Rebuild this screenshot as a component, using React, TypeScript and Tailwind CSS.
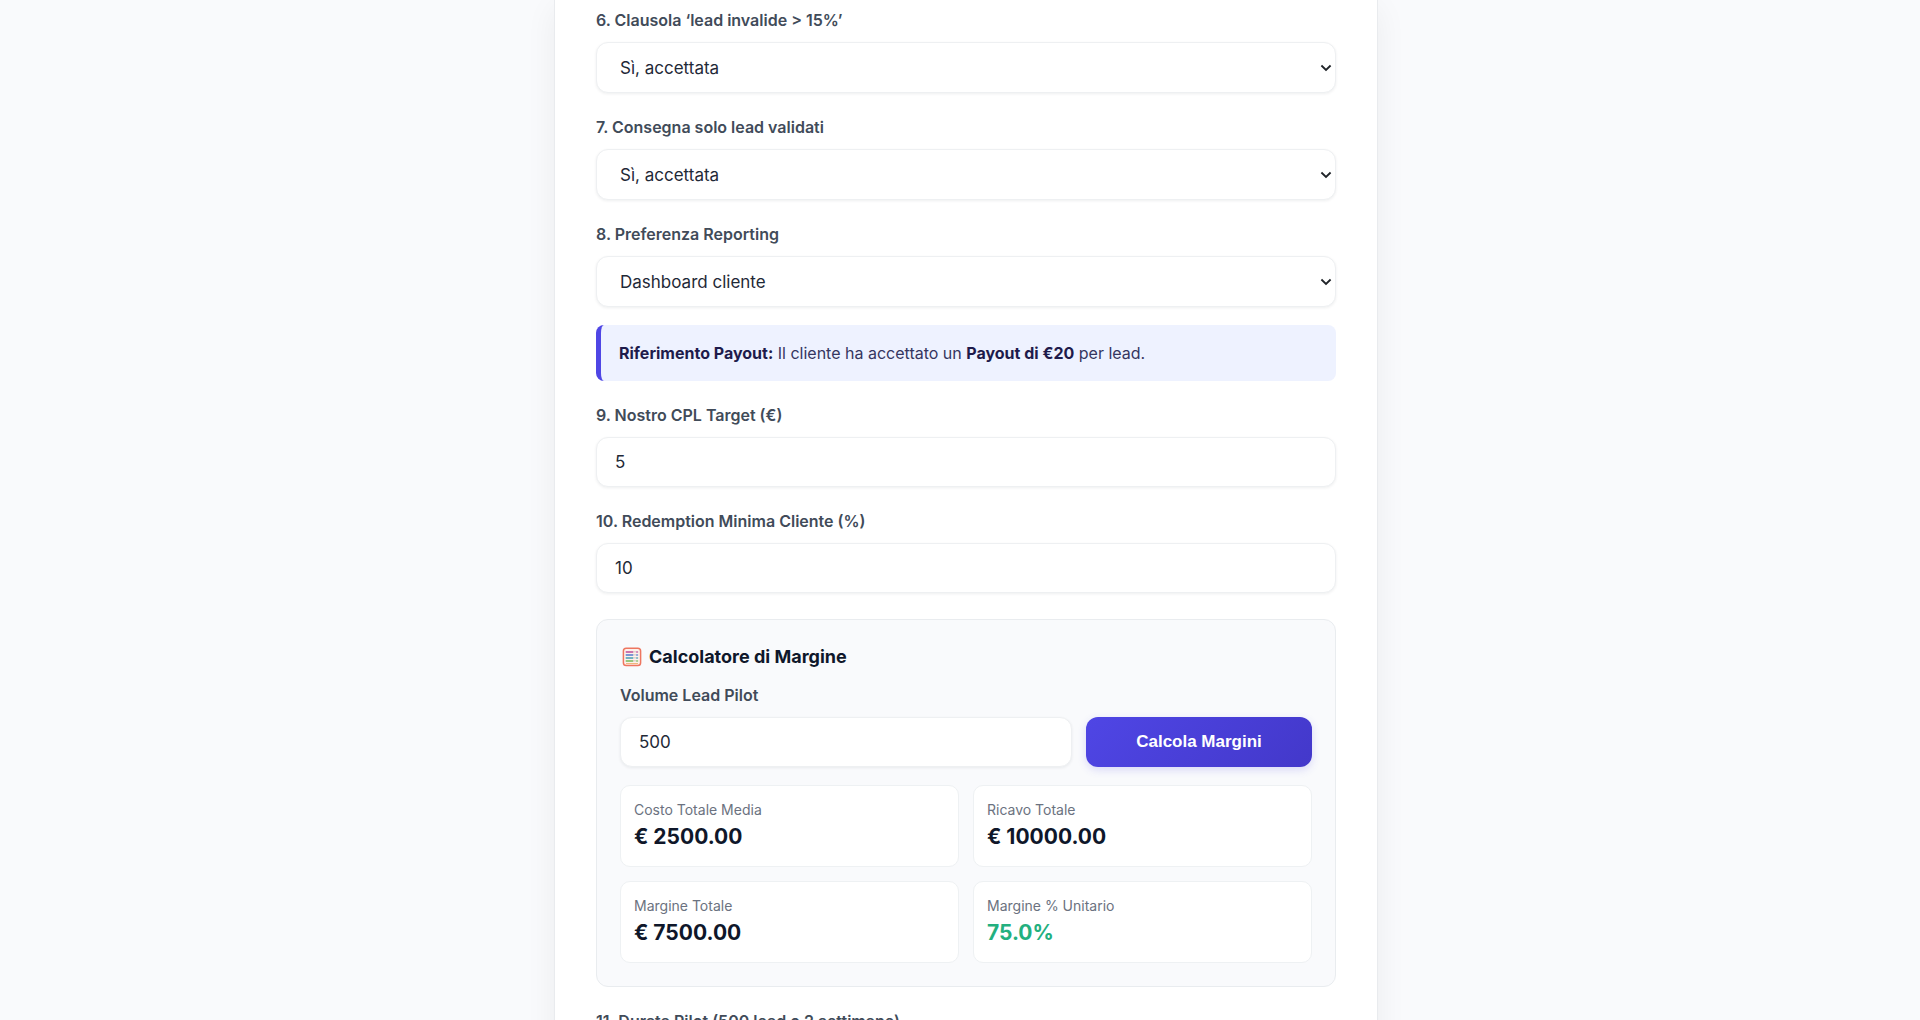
import { useState } from "react";
import type { ReactNode } from "react";

const labelClass = "block text-[16px] leading-6 font-semibold text-[#414b59]";
const inputClass =
  "block w-full h-[50px] rounded-xl border border-[#eef0f2] bg-white px-[18px] text-[17px] leading-6 text-[#1f2937] shadow-[0_1px_3px_rgba(15,23,42,0.07)] outline-none focus:border-indigo-500";

function Field({ id, label, children }: { id: string; label: string; children: ReactNode }) {
  return (
    <div className="flex flex-col gap-[10px]">
      <label htmlFor={id} className={labelClass}>
        {label}
      </label>
      {children}
    </div>
  );
}

function Select({ id, options }: { id: string; options: string[] }) {
  return (
    <div className="relative">
      <select
        id={id}
        className="block w-full h-[51px] appearance-none rounded-xl border border-[#eef0f2] bg-white pl-[23px] pr-8 text-[17px] leading-6 text-[#1f2937] shadow-[0_1px_3px_rgba(15,23,42,0.07)] outline-none focus:border-indigo-500"
      >
        {options.map((o) => (
          <option key={o}>{o}</option>
        ))}
      </select>
      <svg
        viewBox="0 0 12 8"
        className="pointer-events-none absolute inset-y-0 right-1 my-auto h-2 w-3"
        fill="none"
        stroke="#1f2328"
        strokeWidth="1.8"
        aria-hidden="true"
      >
        <path d="M1.4 1.5 6 6l4.600-4.500" />
      </svg>
    </div>
  );
}

function AbacusIcon() {
  const rows = [
    { y: 4.8, c: "#c2559d" },
    { y: 7.8, c: "#5b7fd0" },
    { y: 10.8, c: "#4fa3b5" },
    { y: 13.8, c: "#7dbb62" },
  ];
  return (
    <svg viewBox="0 0 20 20" className="size-5" aria-hidden="true">
      <rect x="1.400" y="1.300" width="17.200" height="17.200" rx="2.800" fill="#fdf1ec" stroke="#ee7660" strokeWidth="1.500" />
      {rows.map((r) => (
        <g key={r.y}>
          <rect x="3.600" y={r.y - 0.9} width="7.800" height="2" rx="0.600" fill={r.c} opacity="0.8" />
          <rect x="11.400" y={r.y - 0.2} width="2.600" height="0.600" fill="#b9a7a7" />
          <rect x="14" y={r.y - 0.9} width="2.200" height="2" rx="0.600" fill={r.c} opacity="0.65" />
        </g>
      ))}
      <path d="M4 16.600h12" stroke="#e8a050" strokeWidth="0.800" />
    </svg>
  );
}

function Stat({ label, value, positive = false }: { label: string; value: string; positive?: boolean }) {
  return (
    <div className="flex flex-col gap-1 rounded-[10px] border border-[#eef1f3] bg-white px-[13px] pt-[14px] pb-4">
      <div className="text-[14px] leading-5 text-[#6b7280]">{label}</div>
      <div className={positive ? "text-[21px] leading-[26px] font-bold text-[#23b07f]" : "text-[21px] leading-[26px] font-bold text-[#0f172a]"}>
        {value}
      </div>
    </div>
  );
}

export default function App() {
  const [cpl, setCpl] = useState("5");
  const [redemption, setRedemption] = useState("10");
  const [volume, setVolume] = useState("500");
  const payout = 20;
  const [result, setResult] = useState({ cost: 2500, revenue: 10000 });
  const margin = result.revenue - result.cost;

  return (
    <div className="h-screen overflow-hidden bg-[#f9fafc] pl-3 font-['Inter',sans-serif]">
      <main className="mx-auto min-h-full w-full max-w-[824px] border-x border-[#e9ebee] bg-white px-[41px] pt-2 shadow-[0_8px_30px_rgba(15,23,42,0.06)]">
        <form className="flex flex-col gap-[22px]" onSubmit={(e) => e.preventDefault()}>
          <Field id="clausola" label="6. Clausola ‘lead invalide > 15%’">
            <Select id="clausola" options={["Sì, accettata", "No"]} />
          </Field>
          <Field id="consegna" label="7. Consegna solo lead validati">
            <Select id="consegna" options={["Sì, accettata", "No"]} />
          </Field>
          <div className="flex flex-col gap-[18px]">
            <Field id="reporting" label="8. Preferenza Reporting">
              <Select id="reporting" options={["Dashboard cliente", "Email"]} />
            </Field>
            <p className="rounded-lg border-l-[5px] border-[#4f46e5] bg-[#eef2ff] px-[18px] py-4 text-[16px] leading-6 text-[#35365f]">
              <strong className="font-bold text-[#1e1b4b]">Riferimento Payout:</strong> Il cliente ha accettato un{" "}
              <strong className="font-bold text-[#1e1b4b]">Payout di €20</strong> per lead.
            </p>
          </div>
          <Field id="cpl" label="9. Nostro CPL Target (€)">
            <input id="cpl" className={inputClass} value={cpl} onChange={(e) => setCpl(e.target.value)} />
          </Field>
          <Field id="redemption" label="10. Redemption Minima Cliente (%)">
            <input id="redemption" className={inputClass} value={redemption} onChange={(e) => setRedemption(e.target.value)} />
          </Field>

          <section className="mt-1 rounded-xl border border-[#e9ecef] bg-[#f9fafc] p-[23px]">
            <h3 className="flex items-center gap-[7px] pl-[2px] text-[18px] leading-7 font-bold text-[#0f172a]">
              <AbacusIcon />
              Calcolatore di Margine
            </h3>
            <div className="mt-3">
              <label htmlFor="volume" className={labelClass}>
                Volume Lead Pilot
              </label>
              <div className="mt-[10px] grid grid-cols-[2fr_1fr] gap-[14px]">
                <input id="volume" className={inputClass} value={volume} onChange={(e) => setVolume(e.target.value)} />
                <button
                  type="button"
                  onClick={() => setResult({ cost: Number(volume) * Number(cpl), revenue: Number(volume) * payout })}
                  className="h-[50px] rounded-xl bg-linear-135 from-[#4f46e5] to-[#4338ca] font-['Liberation_Sans',Arial,sans-serif] text-[17px] font-bold text-white shadow-[0_3px_8px_rgba(79,70,229,0.18)]"
                >
                  Calcola Margini
                </button>
              </div>
            </div>
            <div className="mt-[18px] grid grid-cols-2 gap-[14px]">
              <Stat label="Costo Totale Media" value={`€ ${result.cost.toFixed(2)}`} />
              <Stat label="Ricavo Totale" value={`€ ${result.revenue.toFixed(2)}`} />
              <Stat label="Margine Totale" value={`€ ${margin.toFixed(2)}`} />
              <Stat label="Margine % Unitario" value={`${((margin / result.revenue) * 100).toFixed(1)}%`} positive />
            </div>
          </section>

          <Field id="durata" label="11. Durata Pilot (500 lead o 2 settimane)">
            <Select id="durata" options={["Sì, accettata", "No"]} />
          </Field>
        </form>
      </main>
    </div>
  );
}
